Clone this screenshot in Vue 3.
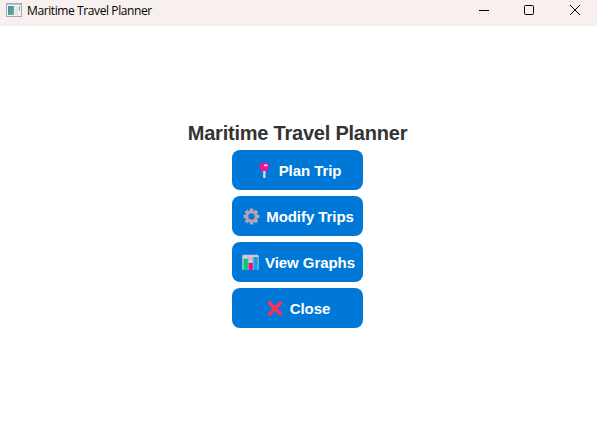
<script setup>
const actions = [
  { icon: 'pin', label: 'Plan Trip' },
  { icon: 'gear', label: 'Modify Trips' },
  { icon: 'chart', label: 'View Graphs' },
  { icon: 'cross', label: 'Close' },
]
const teeth = [0, 45, 90, 135, 180, 225, 270, 315]
</script>

<template>
  <div class="window">
    <header class="titlebar">
      <svg class="app-icon" width="16" height="14" viewBox="0 0 16 14">
        <defs>
          <linearGradient id="pane" x1="0" y1="0" x2="1" y2="1">
            <stop offset="0" stop-color="#4b86b5" />
            <stop offset="1" stop-color="#5cb888" />
          </linearGradient>
        </defs>
        <rect x=".5" y=".5" width="15" height="13" fill="#f1f5f5" stroke="#a3aab0" />
        <rect x="1" y="1" width="14" height="1" fill="#b9c5cf" />
        <rect x="2" y="3" width="6" height="9" fill="url(#pane)" />
        <rect x="9" y="3" width="3" height="9" fill="#dfe5e5" />
        <rect x="13" y="3" width="1" height="5" fill="#69b997" />
      </svg>
      <span class="title">Maritime Travel Planner</span>
      <div class="controls">
        <svg width="46" height="20" viewBox="0 0 46 20"><path d="M18 10.5h10" stroke="#000" /></svg>
        <svg width="46" height="20" viewBox="0 0 46 20"><rect x="17.5" y="5.5" width="9" height="9" rx="1" fill="none" stroke="#000" /></svg>
        <svg width="46" height="20" viewBox="0 0 46 20"><path d="M17 5l10 10M27 5l-10 10" stroke="#000" /></svg>
      </div>
    </header>
    <main class="content">
      <h1>Maritime Travel Planner</h1>
      <button v-for="a in actions" :key="a.label" type="button">
        <svg v-if="a.icon === 'pin'" class="icon" width="20" height="18" viewBox="0 0 20 18">
          <rect x="9" y="8" width="2.7" height="9" fill="#b4bfd0" />
          <rect x="9.8" y="9" width="1" height="8" fill="#d9e2ec" />
          <rect x="5.8" y="1.8" width="8.9" height="8.2" rx="3.4" fill="#f9108c" />
          <rect x="10" y="3.4" width="3.4" height="1.8" rx=".5" fill="#ffe3f3" />
        </svg>
        <svg v-else-if="a.icon === 'gear'" class="icon" width="20" height="18" viewBox="0 0 20 18">
          <g fill="#b0a8ba">
            <rect v-for="t in teeth" :key="t" x="8.7" y="1.6" width="3.6" height="4" rx=".5" :transform="`rotate(${t} 10.5 9.5)`" />
          </g>
          <circle cx="10.5" cy="9.5" r="4.5" fill="none" stroke="#b0a8ba" stroke-width="3" />
          <circle cx="10.5" cy="9.5" r="3.4" fill="none" stroke="#8c829f" stroke-width="1" />
        </svg>
        <svg v-else-if="a.icon === 'chart'" class="icon" width="20" height="18" viewBox="0 0 20 18">
          <rect x="2.3" y="1.8" width="16.3" height="15.2" rx="1.5" fill="#d3cbe3" />
          <path d="M2.8 6h15.5M2.8 10h15.5M8 2.3v14M13 2.3v14" stroke="#aaa1bf" stroke-width=".8" />
          <rect x="3.5" y="6" width="4.4" height="11" fill="#00cc6a" />
          <rect x="8.5" y="10" width="4.4" height="7" fill="#f70a8d" />
          <rect x="13.5" y="4" width="4.2" height="13" fill="#10a5d8" />
        </svg>
        <svg v-else class="icon" width="20" height="18" viewBox="0 0 20 18">
          <path d="M4.5 4l11 11M15.5 4l-11 11" stroke="#f8315f" stroke-width="3.8" stroke-linecap="round" />
        </svg>
        <span>{{ a.label }}</span>
      </button>
    </main>
  </div>
</template>

<style>
body {
  margin: 0;
  background: #fff;
}
</style>

<style scoped>
.window {
  display: flex;
  flex-direction: column;
  height: 422px;
  overflow: hidden;
  background: #fff;
}
.titlebar {
  display: flex;
  align-items: flex-start;
  box-sizing: border-box;
  height: 26px;
  padding-left: 6px;
  background: #f8f0ef;
}
.app-icon {
  margin-top: 3px;
}
.title {
  margin-left: 5px;
  font: 12px/22px "Open Sans", "Noto Sans", sans-serif;
  letter-spacing: -0.4px;
  color: #000;
  white-space: nowrap;
}
.controls {
  display: flex;
  margin-left: auto;
  margin-right: -2px;
}
.content {
  display: flex;
  flex-direction: column;
  align-items: center;
  gap: 6px;
  padding: 96px 2px 0 0;
  font-family: "Liberation Sans", Arial, sans-serif;
}
h1 {
  margin: 0;
  font-size: 20px;
  line-height: 22px;
  letter-spacing: -0.22px;
  color: #333;
  white-space: nowrap;
}
button {
  display: flex;
  align-items: center;
  justify-content: center;
  width: 131px;
  height: 40px;
  padding: 0;
  border: 0;
  border-radius: 8px;
  background: #0078d7;
  color: #fff;
  font: bold 15px/18px "Liberation Sans", Arial, sans-serif;
  letter-spacing: -0.07px;
  white-space: nowrap;
}
.icon {
  flex: none;
  margin-right: 5px;
}
button span {
  padding-top: 2px;
}
</style>
